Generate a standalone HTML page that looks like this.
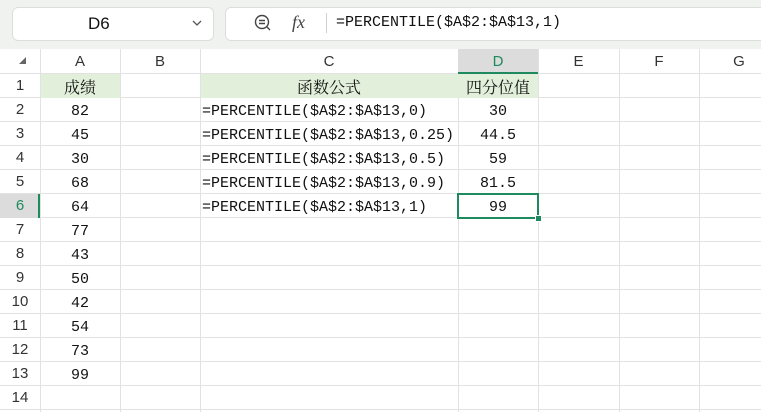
<!DOCTYPE html>
<html><head><meta charset="utf-8"><style>
body{margin:0;width:761px;height:412px;overflow:hidden;background:#fff;font-family:"Liberation Sans","Noto Sans CJK SC",sans-serif;position:relative}
.top{position:absolute;left:0;top:0;width:761px;height:49px;background:#f0f2f0}
.box{position:absolute;background:#fff;border:1px solid #dcdedc;border-radius:6px}
.abs{position:absolute}
.cell{position:absolute;font-family:"Liberation Mono","Noto Serif CJK SC",monospace;font-size:15px;color:#111;line-height:24px;white-space:nowrap}
.hl{position:absolute;background:#e2efda}
.rh{position:absolute;left:0;width:40px;text-align:center;font-size:15px;color:#333;line-height:24px}
.ch{position:absolute;top:49px;height:25px;line-height:25px;text-align:center;font-size:15px;color:#333}
</style></head><body>
<div class="top"></div>
<div class="box" style="left:12px;top:7px;width:200px;height:32px"></div>
<div class="abs" style="left:88px;top:14px;font-size:17px;color:#111">D6</div>
<svg class="abs" style="left:192px;top:19px" width="10" height="8"><path d="M1 2L5 6L9 2" stroke="#555" fill="none" stroke-width="1.3"/></svg>
<div class="box" style="left:225px;top:7px;width:545px;height:32px"></div>
<svg class="abs" style="left:254px;top:14px" width="18" height="18"><circle cx="8" cy="8" r="6.5" stroke="#444" fill="none" stroke-width="1.4"/><path d="M5 6.5H11M5 9.5H11M13 13L16 16" stroke="#444" stroke-width="1.4"/></svg>
<div class="abs" style="left:292px;top:12px;font-family:'Liberation Serif',serif;font-style:italic;font-size:18px;color:#444">fx</div>
<div class="abs" style="left:326px;top:13px;width:1px;height:20px;background:#d0d0d0"></div>
<div class="cell" style="left:336px;top:11px">=PERCENTILE($A$2:$A$13,1)</div>
<svg class="abs" style="left:0;top:49px" width="761" height="363">
<g stroke="#e2e2e2" stroke-width="1">
<line x1="40.5" y1="0" x2="40.5" y2="363"/><line x1="120.5" y1="0" x2="120.5" y2="363"/><line x1="200.5" y1="0" x2="200.5" y2="363"/><line x1="458.5" y1="0" x2="458.5" y2="363"/><line x1="538.5" y1="0" x2="538.5" y2="363"/><line x1="619.5" y1="0" x2="619.5" y2="363"/><line x1="699.5" y1="0" x2="699.5" y2="363"/>
<line x1="0" y1="24.5" x2="761" y2="24.5"/><line x1="0" y1="48.5" x2="761" y2="48.5"/><line x1="0" y1="72.5" x2="761" y2="72.5"/><line x1="0" y1="96.5" x2="761" y2="96.5"/><line x1="0" y1="120.5" x2="761" y2="120.5"/><line x1="0" y1="144.5" x2="761" y2="144.5"/><line x1="0" y1="168.5" x2="761" y2="168.5"/><line x1="0" y1="192.5" x2="761" y2="192.5"/><line x1="0" y1="216.5" x2="761" y2="216.5"/><line x1="0" y1="240.5" x2="761" y2="240.5"/><line x1="0" y1="264.5" x2="761" y2="264.5"/><line x1="0" y1="288.5" x2="761" y2="288.5"/><line x1="0" y1="312.5" x2="761" y2="312.5"/><line x1="0" y1="336.5" x2="761" y2="336.5"/><line x1="0" y1="360.5" x2="761" y2="360.5"/>
</g>
<path d="M19 15L26 8V15Z" fill="#666"/>
</svg>
<div class="abs" style="left:458px;top:49px;width:80px;height:24px;background:#dcdcdc"></div>
<div class="abs" style="left:458px;top:72px;width:80px;height:2px;background:#1e8a5e"></div>
<div class="abs" style="left:0;top:194px;width:40px;height:24px;background:#dcdcdc"></div>
<div class="abs" style="left:38px;top:194px;width:2px;height:24px;background:#1e8a5e"></div>
<div class="ch" style="left:40px;width:80px">A</div><div class="ch" style="left:120px;width:80px">B</div><div class="ch" style="left:200px;width:258px">C</div><div class="ch" style="left:458px;width:80px;color:#1e8a5e">D</div><div class="ch" style="left:538px;width:81px">E</div><div class="ch" style="left:619px;width:80px">F</div><div class="ch" style="left:699px;width:80px">G</div>
<div class="hl" style="left:41px;top:74px;width:79px;height:24px"></div>
<div class="hl" style="left:201px;top:74px;width:337px;height:24px"></div>
<div class="rh" style="top:74px">1</div><div class="rh" style="top:98px">2</div><div class="rh" style="top:122px">3</div><div class="rh" style="top:146px">4</div><div class="rh" style="top:170px">5</div><div class="rh" style="top:194px;color:#1e8a5e">6</div><div class="rh" style="top:218px">7</div><div class="rh" style="top:242px">8</div><div class="rh" style="top:266px">9</div><div class="rh" style="top:290px">10</div><div class="rh" style="top:314px">11</div><div class="rh" style="top:338px">12</div><div class="rh" style="top:362px">13</div><div class="rh" style="top:386px">14</div>
<div class="cell" style="left:40px;width:80px;text-align:center;top:75px;font-family:'Noto Serif CJK SC',serif;font-size:16px">成绩</div>
<div class="cell" style="left:200px;width:258px;text-align:center;top:75px;font-family:'Noto Serif CJK SC',serif;font-size:16px">函数公式</div>
<div class="cell" style="left:458px;width:80px;text-align:center;top:75px;font-family:'Noto Serif CJK SC',serif;font-size:16px">四分位值</div>
<div class="cell" style="left:40px;width:80px;text-align:center;top:100px">82<br>45<br>30<br>68<br>64<br>77<br>43<br>50<br>42<br>54<br>73<br>99</div>
<div class="cell" style="left:202px;top:100px">=PERCENTILE($A$2:$A$13,0)<br>=PERCENTILE($A$2:$A$13,0.25)<br>=PERCENTILE($A$2:$A$13,0.5)<br>=PERCENTILE($A$2:$A$13,0.9)<br>=PERCENTILE($A$2:$A$13,1)</div>
<div class="cell" style="left:458px;width:80px;text-align:center;top:100px">30<br>44.5<br>59<br>81.5<br>99</div>
<div class="abs" style="left:457px;top:193px;width:78px;height:22px;border:2px solid #1e8a5e"></div>
<div class="abs" style="left:535px;top:215px;width:5px;height:5px;background:#1e8a5e;border:1px solid #fff"></div>
</body></html>
